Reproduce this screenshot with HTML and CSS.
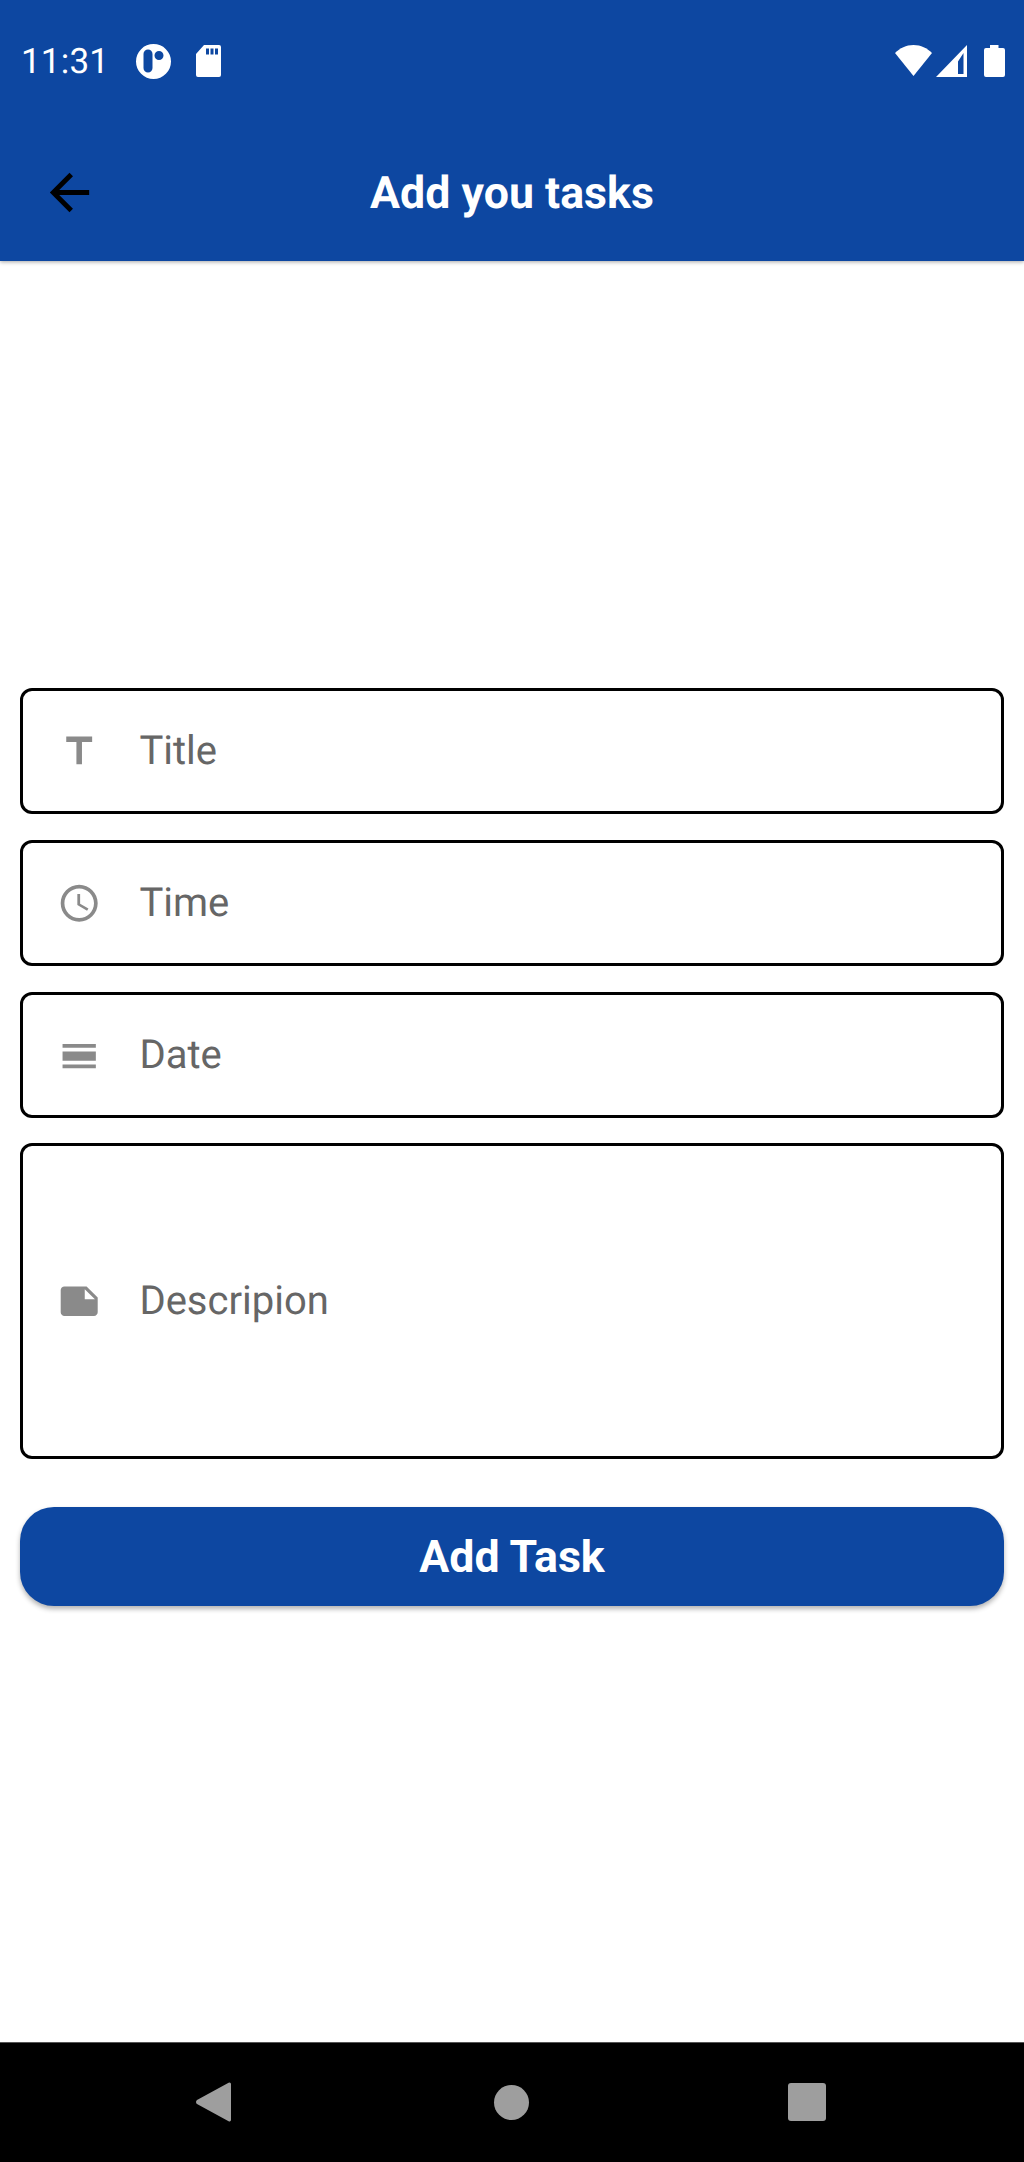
FILE: index.html
```html
<!DOCTYPE html>
<html lang="en">
<head>
<meta charset="utf-8">
<title>Add you tasks</title>
<link rel="stylesheet" href="styles.css">
</head>
<body>
<div class="screen">
  <header class="appbar">
    <div class="statusbar">
      <span class="clock">11:31</span>
      <svg class="st-circle" viewBox="0 0 35 35"><path fill="#fff" fill-rule="evenodd" d="M17.500 0a17.500 17.500 0 1 0 0 35a17.500 17.500 0 1 0 0-35zM12 5.500a4.500 4.500 0 0 1 4.500 4.500v14a4.500 4.500 0 0 1-9 0v-14a4.500 4.500 0 0 1 4.500-4.500zM23 7a4.500 4.500 0 1 1 0 9a4.500 4.500 0 1 1 0-9z"/></svg>
      <svg class="st-sd" viewBox="0 0 25 32"><path fill="#fff" fill-rule="evenodd" d="M8 0H23a2 2 0 0 1 2 2V30a2 2 0 0 1-2 2H2a2 2 0 0 1-2-2V9zM10 3.500v6h3v-6zM14.500 3.500v6h3v-6zM19 3.500v6h3v-6z"/></svg>
      <span class="st-spacer"></span>
      <svg class="st-wifi" viewBox="0 0 37 31"><path fill="#fff" d="M18.500 0C11 0 5 3 0 8L18.500 31 37 8C32 3 26 0 18.500 0z"/></svg>
      <svg class="st-signal" viewBox="0 0 31 32"><path fill="#fff" fill-rule="evenodd" d="M31 0V32H0zM27.500 8L22 16.500V29H27.500z"/></svg>
      <svg class="st-battery" viewBox="0 0 21 32"><path fill="#fff" d="M6 0H14.500V3H19a2 2 0 0 1 2 2V30a2 2 0 0 1-2 2H2a2 2 0 0 1-2-2V5a2 2 0 0 1 2-2H6z"/></svg>
    </div>
    <div class="toolbar">
      <svg class="back" viewBox="0 0 24 24"><path d="M20 11H7.830l5.590-5.590L12 4l-8 8 8 8 1.410-1.410L7.830 13H20v-2z"/></svg>
      <h1 class="title">Add you tasks</h1>
    </div>
  </header>

  <main class="content">
    <form class="form">
      <label class="field">
        <svg class="field-icon" viewBox="0 0 24 24"><path d="M5 4v3h5.500v12h3V7H19V4z"/></svg>
        <span class="placeholder">Title</span>
      </label>
      <label class="field">
        <svg class="field-icon" viewBox="0 0 24 24"><path d="M11.990 2C6.470 2 2 6.480 2 12s4.470 10 9.990 10C17.520 22 22 17.520 22 12S17.520 2 11.990 2zM12 20c-4.420 0-8-3.580-8-8s3.580-8 8-8 8 3.580 8 8-3.580 8-8 8zm.5-13H11v6l5.250 3.150.75-1.230-4.500-2.670z"/></svg>
        <span class="placeholder">Time</span>
      </label>
      <label class="field">
        <svg class="field-icon" viewBox="0 0 24 24"><path d="M3 17h18v2H3zm0-7h18v5H3zm0-4h18v2H3z"/></svg>
        <span class="placeholder">Date</span>
      </label>
      <label class="field field-tall">
        <svg class="field-icon" viewBox="0 0 24 24"><path d="M22 10l-6-6H4c-1.100 0-2 .9-2 2v12.010c0 1.100.9 1.990 2 1.990l16-.01c1.100 0 2-.89 2-1.990v-8zm-7-4.500l5.500 5.500H15V5.500z"/></svg>
        <span class="placeholder">Descripion</span>
      </label>
      <button class="submit" type="button">Add Task</button>
    </form>
  </main>

  <nav class="navbar">
    <svg class="nav-back" viewBox="0 0 35 40"><path fill="#9e9e9e" d="M35 2V38a1.500 1.500 0 0 1-2.400 1.200L1 22a2.500 2.500 0 0 1 0-4L32.600.8A1.500 1.500 0 0 1 35 2z"/></svg>
    <span class="nav-home"></span>
    <span class="nav-recent"></span>
  </nav>
</div>
</body>
</html>
```
FILE: styles.css
```css
* { box-sizing: border-box; }
html, body { margin: 0; padding: 0; background: #fff; }
body { font-family: Roboto, "Liberation Sans", sans-serif; text-rendering: geometricPrecision; }

.screen {
  width: 1024px;
  height: 2162px;
  display: flex;
  flex-direction: column;
  overflow: hidden;
}

.appbar {
  height: 261px;
  flex: none;
  background: #0d47a1;
  box-shadow: 0 1px 4px rgba(0, 0, 0, 0.35);
  position: relative;
  z-index: 1;
  display: flex;
  flex-direction: column;
}

.statusbar {
  height: 122px;
  padding: 44px 19px 0 21px;
  display: flex;
  align-items: flex-start;
  flex: none;
}
.clock { color: #fff; font-size: 35px; line-height: 36px; width: 115px; letter-spacing: 0.2px; }
.statusbar svg { display: block; flex: none; }
.st-circle { width: 35px; height: 35px; margin-right: 25px; }
.st-sd { width: 25px; height: 32px; margin-top: 1px; }
.st-spacer { flex: 1; }
.st-wifi { width: 37px; height: 31px; margin: 1px 4px 0 0; }
.st-signal { width: 31px; height: 32px; margin: 1px 17px 0 0; }
.st-battery { width: 21px; height: 32px; margin-top: 1px; }

.toolbar {
  flex: 1;
  display: flex;
  align-items: center;
  justify-content: center;
  position: relative;
}
.back { position: absolute; left: 40px; top: 41px; width: 59px; height: 59px; fill: #000; }
.title { margin: 0; color: #fff; font-size: 44.700px; font-weight: 700; line-height: 52px; position: relative; top: 1px; }

.content { flex: 1; padding: 427px 20px 0; }

.form { display: flex; flex-direction: column; gap: 26px; }

.field {
  height: 126px;
  border: 3px solid #000;
  border-radius: 12px;
  display: flex;
  align-items: center;
  padding-left: 34px;
  background: #fff;
}
.field-tall { height: 316px; margin-top: -1px; }
.field-icon { width: 44.400px; height: 44.400px; fill: #8a8a8a; flex: none; margin-right: 38px; }
.placeholder { font-size: 40px; line-height: 46px; color: #666; }

.submit {
  margin-top: 22px;
  height: 99px;
  padding: 0;
  border: 0;
  border-radius: 34px;
  background: #0d47a1;
  color: #fff;
  font-family: inherit;
  font-size: 44.700px;
  font-weight: 700;
  box-shadow: 0 3px 5px rgba(0, 0, 0, 0.3);
}

.navbar {
  height: 120px;
  flex: none;
  background: #000;
  position: relative;
  border-top: 1px solid #555;
}
.nav-back { position: absolute; left: 196px; top: 39px; width: 35px; height: 40px; }
.nav-home { position: absolute; left: 494px; top: 42px; width: 35px; height: 35px; border-radius: 50%; background: #9e9e9e; }
.nav-recent { position: absolute; left: 788px; top: 40px; width: 38px; height: 38px; border-radius: 3px; background: #9e9e9e; }
```
